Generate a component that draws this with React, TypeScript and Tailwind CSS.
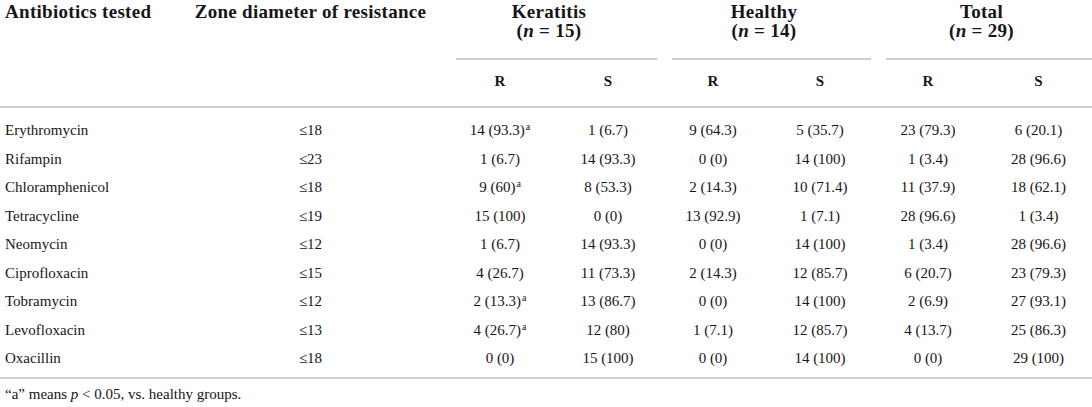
import type { ReactNode } from "react";

type Row = {
  name: string;
  zone: string;
  values: ReactNode[];
};

const Sup = () => <span className="relative -top-[5px] ml-[1px] text-[10px] leading-none">a</span>;

const rows: Row[] = [
  { name: "Erythromycin", zone: "≤18", values: [<>14 (93.3)<Sup /></>, "1 (6.7)", "9 (64.3)", "5 (35.7)", "23 (79.3)", "6 (20.1)"] },
  { name: "Rifampin", zone: "≤23", values: ["1 (6.7)", "14 (93.3)", "0 (0)", "14 (100)", "1 (3.4)", "28 (96.6)"] },
  { name: "Chloramphenicol", zone: "≤18", values: [<>9 (60)<Sup /></>, "8 (53.3)", "2 (14.3)", "10 (71.4)", "11 (37.9)", "18 (62.1)"] },
  { name: "Tetracycline", zone: "≤19", values: ["15 (100)", "0 (0)", "13 (92.9)", "1 (7.1)", "28 (96.6)", "1 (3.4)"] },
  { name: "Neomycin", zone: "≤12", values: ["1 (6.7)", "14 (93.3)", "0 (0)", "14 (100)", "1 (3.4)", "28 (96.6)"] },
  { name: "Ciprofloxacin", zone: "≤15", values: ["4 (26.7)", "11 (73.3)", "2 (14.3)", "12 (85.7)", "6 (20.7)", "23 (79.3)"] },
  { name: "Tobramycin", zone: "≤12", values: [<>2 (13.3)<Sup /></>, "13 (86.7)", "0 (0)", "14 (100)", "2 (6.9)", "27 (93.1)"] },
  { name: "Levofloxacin", zone: "≤13", values: [<>4 (26.7)<Sup /></>, "12 (80)", "1 (7.1)", "12 (85.7)", "4 (13.7)", "25 (86.3)"] },
  { name: "Oxacillin", zone: "≤18", values: ["0 (0)", "15 (100)", "0 (0)", "14 (100)", "0 (0)", "29 (100)"] },
];

const groups = [
  { title: "Keratitis", n: "15" },
  { title: "Healthy", n: "14" },
  { title: "Total", n: "29" },
];

const cols = "grid grid-cols-[180px_261px_118px_98px_112px_102px_114px_107px]";
const head = "text-[19px] leading-[19px] font-bold tracking-[0.3px]";

export default function App() {
  return (
    <div className="w-[1092px] h-[407px] bg-white text-[#161616] font-['Liberation_Serif',serif] overflow-hidden">
      {/* header */}
      <div className={`${cols} grid-rows-[60px_46px] border-b-2 border-[#d0d0d0]`}>
        <div className={`row-span-2 pl-[5px] pt-[2px] ${head}`}>Antibiotics tested</div>
        <div className={`row-span-2 pt-[2px] text-center ${head}`}>Zone diameter of resistance</div>
        {groups.map((g) => (
          <div key={g.title} className="col-span-2 pl-[15px]">
            <div className="h-[60px] pt-[2px] border-b-2 border-[#d0d0d0]">
              <div className={`pr-[15px] text-center ${head}`}>{g.title}</div>
              <div className={`pr-[15px] text-center ${head}`}>
                (<i>n</i> = {g.n})
              </div>
            </div>
          </div>
        ))}
        {["R", "S", "R", "S", "R", "S"].map((s, i) => (
          <div key={i} className="flex items-center justify-center pb-[4px] text-[15px] font-bold">
            {s}
          </div>
        ))}
      </div>

      {/* body */}
      <div className="pt-[8px] pb-[4.5px] border-b-2 border-[#d0d0d0] text-[15px]">
        {rows.map((r) => (
          <div key={r.name} className={`${cols} h-[28.5px] items-center`}>
            <div className="pl-[5px]">{r.name}</div>
            <div className="text-center">{r.zone}</div>
            {r.values.map((v, i) => (
              <div key={i} className="text-center whitespace-nowrap">
                {v}
              </div>
            ))}
          </div>
        ))}
      </div>

      <p className="mt-[6px] pl-[5px] text-[15px] leading-[18px]">
        “a” means <i>p</i> &lt; 0.05, vs. healthy groups.
      </p>
    </div>
  );
}
